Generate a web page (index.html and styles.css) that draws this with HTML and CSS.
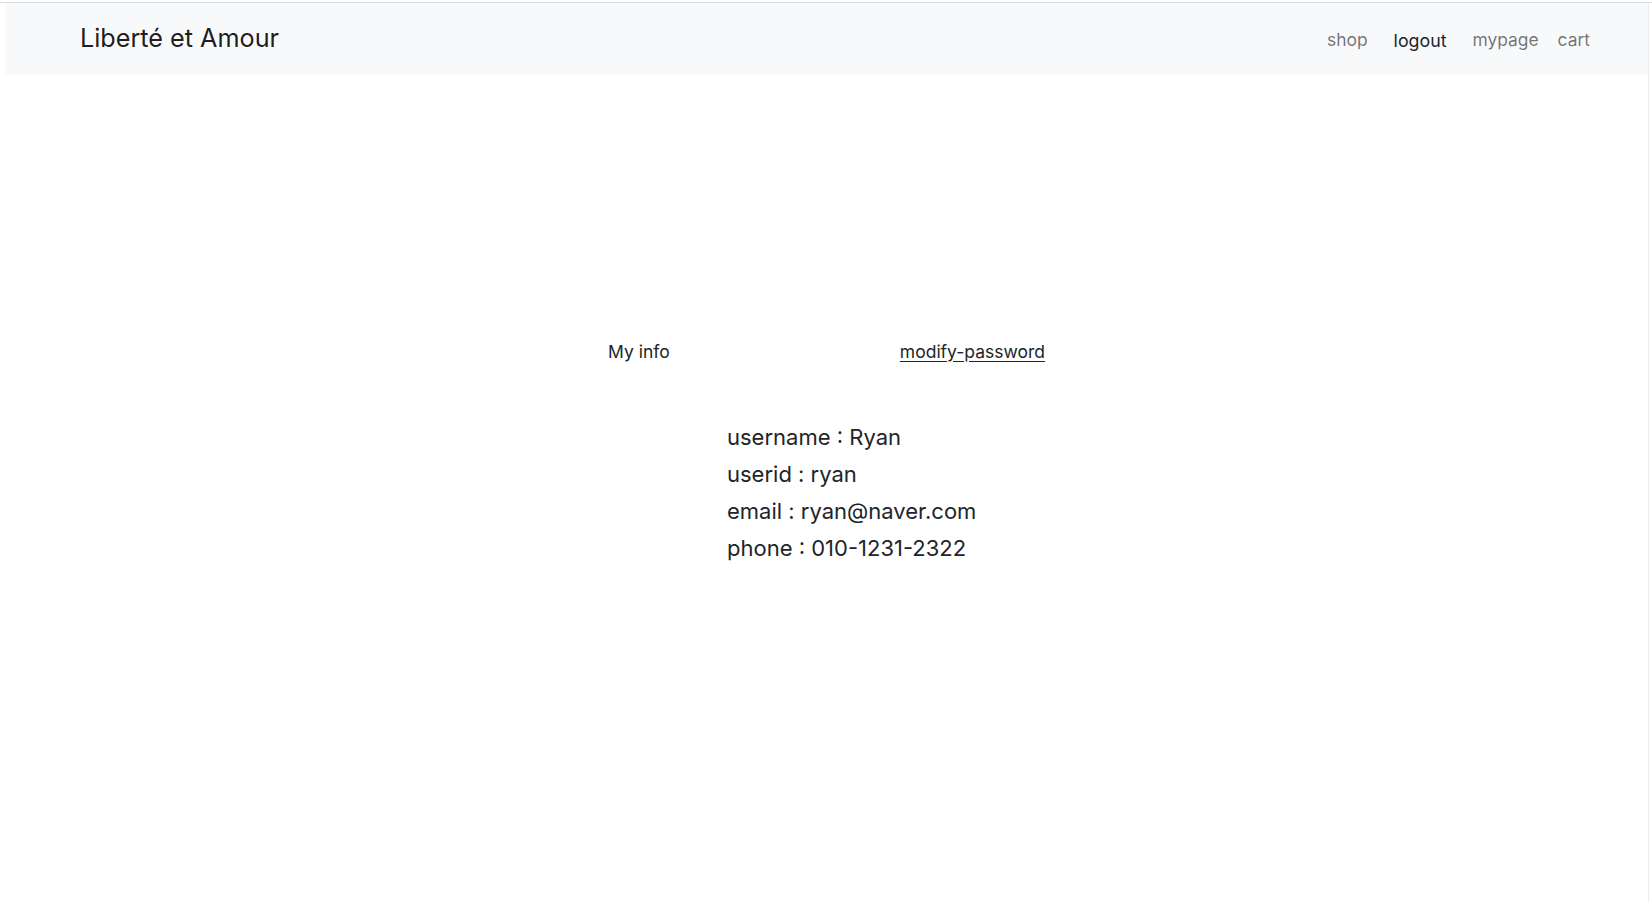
FILE: index.html
```html
<!DOCTYPE html>
<html lang="en">
<head>
<meta charset="utf-8">
<title>Liberté et Amour</title>
<link rel="stylesheet" href="styles.css">
</head>
<body>
<div class="frame">
  <nav class="navbar">
    <a class="brand" href="#">Liberté et Amour</a>
    <ul class="nav-links">
      <li><a class="nav-link" href="#">shop</a></li>
      <li><a class="nav-link nav-logout" href="#">logout</a></li>
      <li><a class="nav-link" href="#">mypage</a></li>
      <li><a class="nav-link" href="#">cart</a></li>
    </ul>
  </nav>
  <main class="content">
    <div class="tabs">
      <span class="tab">My info</span>
      <a class="tab tab-link" href="#">modify-password</a>
    </div>
    <div class="info">
      <p class="info-line">username : Ryan</p>
      <p class="info-line">userid : ryan</p>
      <p class="info-line">email : ryan@naver.com</p>
      <p class="info-line">phone : 010-1231-2322</p>
    </div>
  </main>
</div>
</body>
</html>
```

FILE: styles.css
```css
* { box-sizing: border-box; }

html, body {
  margin: 0;
  padding: 0;
  background: #ffffff;
}

body {
  font-family: Inter, "Liberation Sans", Arial, sans-serif;
  color: #212529;
  border-top: 1px solid #dcdde0;
  margin-top: 2px;
  padding-left: 5px;
  padding-right: 3px;
}

.frame {
  height: 899px;
  border-right: 1px solid #ebebeb;
}

.navbar {
  height: 72px;
  background: #f8f9fa;
  display: flex;
  align-items: center;
  justify-content: space-between;
  padding: 0 58px 0 75px;
}

.brand {
  font-size: 25.2px;
  color: rgba(0, 0, 0, 0.9);
  text-decoration: none;
  margin-top: -2px;
}

.nav-links {
  list-style: none;
  margin: 0;
  padding: 0;
  display: flex;
  align-items: center;
}

.nav-link {
  display: block;
  font-size: 17.4px;
  color: rgba(0, 0, 0, 0.55);
  text-decoration: none;
  margin-left: 19px;
}

.nav-logout {
  color: #212529;
  margin-left: 26px;
  margin-right: 7px;
  padding-top: 2px;
  font-size: 17.8px;
}

.content {
  padding-top: 263px;
}

.tabs {
  width: 437px;
  margin: 0 auto;
  display: flex;
  justify-content: space-between;
  line-height: 27px;
  font-size: 17.5px;
}

.tab {
  color: #212529;
}

.tab-link {
  color: #212529;
  text-decoration: underline;
  text-underline-offset: 3px;
}

.info {
  width: 437px;
  margin: 54px auto 0;
  padding-left: 119px;
}

.info-line {
  margin: 0;
  font-size: 22px;
  line-height: 37px;
  color: #212529;
}
```
